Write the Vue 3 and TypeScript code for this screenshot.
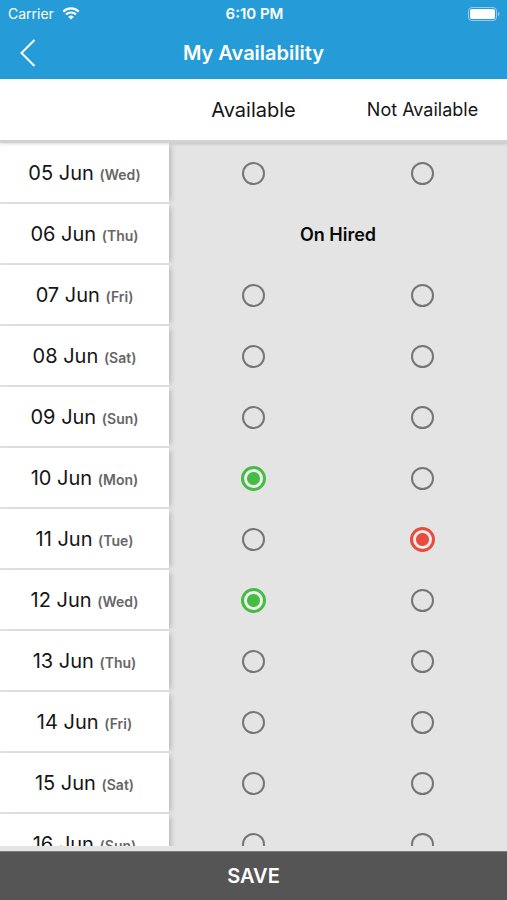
<script setup lang="ts">
import { ref } from 'vue'

type Choice = '' | 'yes' | 'no'

interface Day {
  date: string
  weekday: string
  choice: Choice
  hired?: boolean
}

const days = ref<Day[]>([
  { date: '05 Jun', weekday: 'Wed', choice: '' },
  { date: '06 Jun', weekday: 'Thu', choice: '', hired: true },
  { date: '07 Jun', weekday: 'Fri', choice: '' },
  { date: '08 Jun', weekday: 'Sat', choice: '' },
  { date: '09 Jun', weekday: 'Sun', choice: '' },
  { date: '10 Jun', weekday: 'Mon', choice: 'yes' },
  { date: '11 Jun', weekday: 'Tue', choice: 'no' },
  { date: '12 Jun', weekday: 'Wed', choice: 'yes' },
  { date: '13 Jun', weekday: 'Thu', choice: '' },
  { date: '14 Jun', weekday: 'Fri', choice: '' },
  { date: '15 Jun', weekday: 'Sat', choice: '' },
  { date: '16 Jun', weekday: 'Sun', choice: '' },
])
</script>

<template>
  <div class="screen">
    <header class="top">
      <div class="status">
        <span class="carrier">
          Carrier
          <svg class="wifi" viewBox="0 0 18 13" width="18" height="13" aria-hidden="true">
            <path d="M1.3 4.6a11 11 0 0 1 15.4 0" fill="none" stroke="currentColor" stroke-width="2.2" />
            <path d="M4 7.6a7.1 7.1 0 0 1 10 0" fill="none" stroke="currentColor" stroke-width="2.1" />
            <path d="M9 12.6 6.2 9.8a4 4 0 0 1 5.6 0z" fill="currentColor" />
          </svg>
        </span>
        <span class="clock">6:10 PM</span>
        <svg class="battery" viewBox="0 0 33 14" width="33" height="14" aria-hidden="true">
          <rect x="0.5" y="0.5" width="28" height="13" rx="3.5" fill="none" stroke="#fff" stroke-opacity="0.5" />
          <rect x="2" y="2" width="25" height="10" rx="2" fill="#fff" />
          <path d="M30 4.8a2.4 2.4 0 0 1 0 4.4z" fill="#fff" fill-opacity="0.5" />
        </svg>
      </div>
      <div class="nav">
        <button class="back" type="button" aria-label="Back">
          <svg viewBox="0 0 16 28" width="16" height="28" aria-hidden="true">
            <path d="M14.5 1 1.5 14l13 13" fill="none" stroke="currentColor" stroke-width="2" />
          </svg>
        </button>
        <h1>My Availability</h1>
      </div>
    </header>

    <main class="list">
      <table>
        <thead>
          <tr>
            <td></td>
            <th class="col-yes" scope="col">Available</th>
            <th class="col-no" scope="col">Not Available</th>
          </tr>
        </thead>
        <tbody>
          <tr v-for="day in days" :key="day.date">
            <th class="day" scope="row">
              {{ day.date }} <small>({{ day.weekday }})</small>
            </th>
            <td v-if="day.hired" class="hired" colspan="2">On Hired</td>
            <template v-else>
              <td>
                <input v-model="day.choice" class="yes" type="radio" value="yes" :name="day.date" :aria-label="`${day.date} available`" />
              </td>
              <td>
                <input v-model="day.choice" class="no" type="radio" value="no" :name="day.date" :aria-label="`${day.date} not available`" />
              </td>
            </template>
          </tr>
        </tbody>
      </table>
    </main>

    <button class="save" type="button">SAVE</button>
  </div>
</template>

<style>
body {
  margin: 0;
  background: #e4e4e4;
}
</style>

<style scoped>
.screen {
  display: flex;
  flex-direction: column;
  height: 100vh;
  font-family: Inter, "Liberation Sans", sans-serif;
  color: #151515;
  background: #e4e4e4;
}

.top {
  flex: none;
  color: #fff;
  background: #259cd8;
}

.status {
  display: grid;
  grid-template-columns: 1fr auto 1fr;
  align-items: center;
  height: 27px;
  padding: 0 6px 0 8px;
  font-size: 14px;
}

.carrier {
  display: flex;
  align-items: center;
  gap: 8px;
}

.clock {
  font-size: 15px;
  font-weight: 600;
}

.battery {
  justify-self: end;
}

.nav {
  display: grid;
  grid-template-columns: 56px 1fr 56px;
  align-items: center;
  height: 52px;
}

.back {
  display: flex;
  justify-content: center;
  padding: 0;
  border: 0;
  color: inherit;
  background: none;
}

h1 {
  margin: 0;
  font-size: 20px;
  font-weight: 600;
  line-height: 24px;
  text-align: center;
}

.list {
  flex: 1;
  min-height: 0;
  margin-bottom: 5px;
  overflow-y: auto;
  scrollbar-width: none;
}

table {
  width: 100%;
  table-layout: fixed;
  border-collapse: separate;
  border-spacing: 0;
}

th,
td {
  box-sizing: border-box;
  height: 61px;
  padding: 0;
  text-align: center;
  vertical-align: middle;
}

thead {
  position: sticky;
  top: 0;
  z-index: 1;
  box-shadow: 0 1px 3px rgba(0, 0, 0, 0.15);
}

thead th,
thead td {
  height: 64px;
  border-bottom: 3px solid #d2d2d2;
  background: #fff;
}

thead th {
  font-weight: 400;
}

.col-yes {
  font-size: 20px;
}

.col-no {
  font-size: 18px;
}

.day {
  border-bottom: 2px solid #e0e0e0;
  font-size: 20px;
  font-weight: 400;
  background: #fff;
  box-shadow: 5px 0 5px -3px rgba(0, 0, 0, 0.2);
}

.day small {
  font-size: 14px;
  font-weight: 600;
  color: #666;
}

.hired {
  font-size: 18px;
  font-weight: 600;
  color: #080808;
}

input {
  appearance: none;
  box-sizing: border-box;
  display: block;
  width: 23px;
  height: 23px;
  margin: 0 auto;
  border: 2px solid #757575;
  border-radius: 50%;
}

input:checked {
  width: 25px;
  height: 25px;
  border-width: 3px;
  border-color: currentColor;
  background: radial-gradient(circle, currentColor 6px, #f1eeee 7px);
}

.yes {
  color: #45bd45;
}

.no {
  color: #ea4b3c;
}

.save {
  flex: none;
  height: 49px;
  padding: 0;
  border: 0;
  border-top: 1px solid #7c7c7c;
  font-family: inherit;
  font-size: 20px;
  font-weight: 600;
  color: #fff;
  background: #555;
}
</style>
